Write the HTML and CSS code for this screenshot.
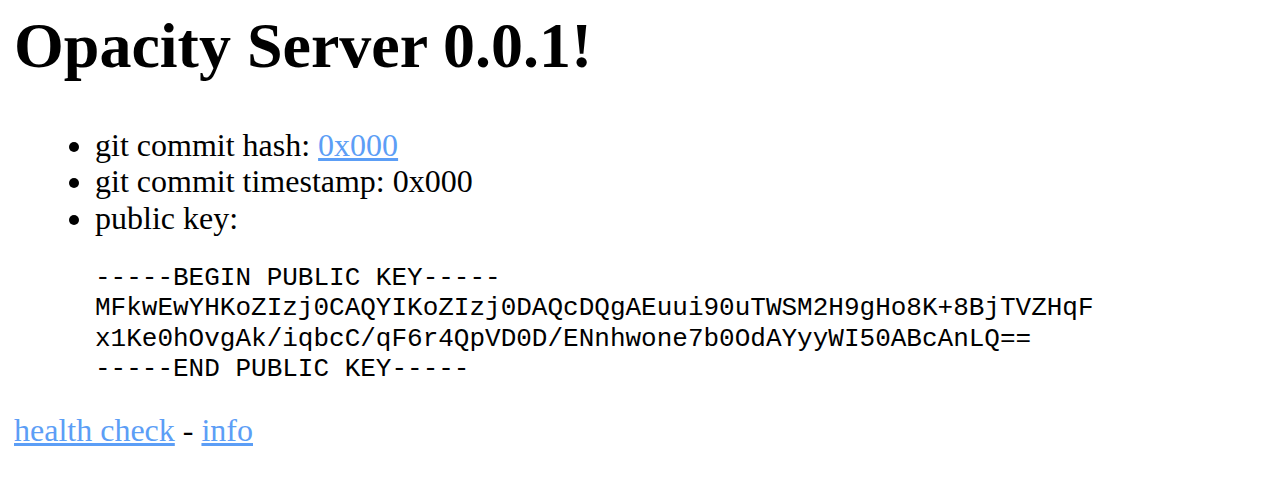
FILE: index.html
```html
<!DOCTYPE html>
<html>
<head>
<meta charset="utf-8">
<title>Opacity Server</title>
<link rel="stylesheet" href="styles.css">
</head>
<body class="page">
<h1 class="title">Opacity Server 0.0.1!</h1>
<ul class="info-list">
<li>git commit hash: <a class="link" href="#">0x000</a></li>
<li>git commit timestamp: 0x000</li>
<li>public key:
<pre class="key">-----BEGIN PUBLIC KEY-----
MFkwEwYHKoZIzj0CAQYIKoZIzj0DAQcDQgAEuui90uTWSM2H9gHo8K+8BjTVZHqF
x1Ke0hOvgAk/iqbcC/qF6r4QpVD0D/ENnhwone7b0OdAYyyWI50ABcAnLQ==
-----END PUBLIC KEY-----</pre>
</li>
</ul>
<p class="footer"><a class="link" href="#">health check</a> - <a class="link" href="#">info</a></p>
</body>
</html>
```

FILE: styles.css
```css
html { background: #fff; }
.page {
  margin: 9px 16px 16px 14px;
  font-family: "Liberation Serif", "Times New Roman", serif;
  font-size: 32px;
  color: #000;
}
.title {
  font-size: 64px;
  font-weight: bold;
  margin: 0 0 44px 0;
  line-height: 1.15;
}
.info-list {
  margin: 32px 0 28px 0;
  padding-left: 81px;
  line-height: 1.15;
}
.key {
  font-family: "Liberation Mono", "Courier New", monospace;
  font-size: 26px;
  line-height: 30.3px;
  margin: 26px 0 18px 0;
  font-weight: normal;
}
.link { color: #5c9ef6; }
.footer { margin: 28px 0; }
```
